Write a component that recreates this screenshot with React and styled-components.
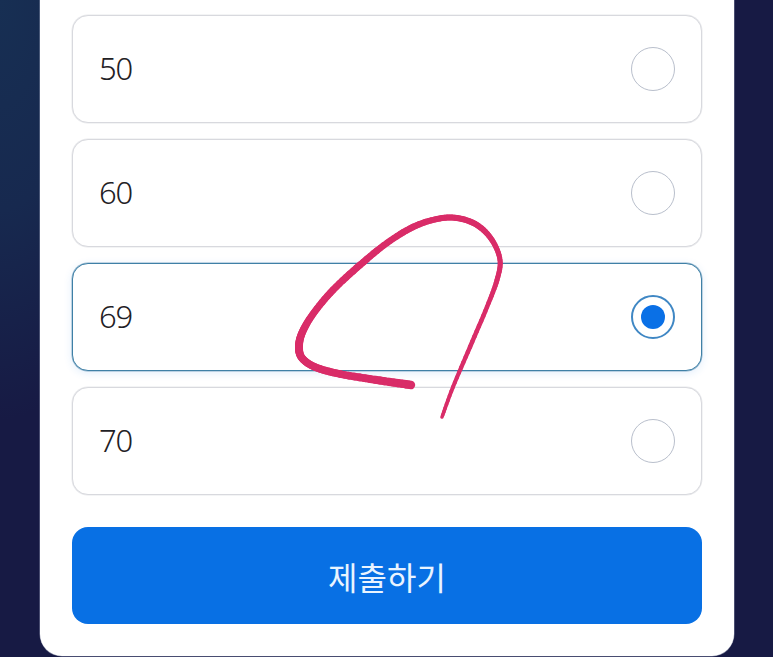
import React from "react";
import styled, { createGlobalStyle } from "styled-components";

const Global = createGlobalStyle`
  html, body { margin: 0; padding: 0; height: 100%; background: #171a44; }
  #root { height: 100%; }
`;

const Page = styled.main`
  position: relative;
  box-sizing: border-box;
  width: 773px;
  height: 657px;
  overflow: hidden;
  padding: 0 39px 1px 40px;
  background:
    radial-gradient(ellipse 170px 420px at 0 0, #172f53 0%, #17294f 50%, rgba(23, 26, 68, 0) 100%),
    #171a44;
  font-family: "Noto Sans CJK KR", "Noto Sans", sans-serif;
`;

const Card = styled.section`
  box-sizing: border-box;
  height: 656px;
  padding: 15px 32px 0 32px;
  background: #fff;
  border-radius: 0 0 22px 22px;
  box-shadow: 0 0 0 0.5px rgba(170, 175, 195, 0.7);
  display: flex;
  flex-direction: column;
`;

const Options = styled.div`
  display: flex;
  flex-direction: column;
  gap: 16px;
`;

const Option = styled.label`
  box-sizing: border-box;
  height: 108px;
  padding: 0 26px 0 26px;
  display: flex;
  align-items: center;
  justify-content: space-between;
  background: #fff;
  border-radius: 16px;
  border: 1px solid ${(p) => (p.$selected ? "#3f80a6" : "#d8d9de")};
  box-shadow: ${(p) =>
    p.$selected
      ? "0 0 0 0.5px rgba(70, 130, 170, 0.6), 0 2px 8px rgba(40, 130, 230, 0.14)"
      : "0 0 0 0.5px rgba(225, 226, 230, 0.8)"};
`;

const Value = styled.span`
  font-family: "Noto Sans", sans-serif;
  font-size: 31px;
  font-weight: 300;
  letter-spacing: -1.2px;
  color: #1f2125;
  line-height: 1;
  position: relative;
  top: -1px;
`;

const Radio = styled.span`
  box-sizing: border-box;
  width: 44px;
  height: 44px;
  border-radius: 50%;
  display: flex;
  align-items: center;
  justify-content: center;
  background: #fff;
  border: ${(p) => (p.$selected ? "2px solid #3f87c4" : "1px solid #b9bfcc")};
`;

const Dot = styled.span`
  width: 24px;
  height: 24px;
  border-radius: 50%;
  background: #0a70e6;
`;

const Submit = styled.button`
  margin-top: 32px;
  width: 100%;
  height: 97px;
  border: none;
  border-radius: 16px;
  background: #0870e4;
  color: #e9f4ff;
  font-family: "Noto Sans CJK KR", sans-serif;
  font-size: 32px;
  font-weight: 400;
`;

const Scribble = styled.svg`
  position: absolute;
  left: 0;
  top: 0;
  width: 773px;
  height: 657px;
  pointer-events: none;
`;

/* hand-drawn pen stroke: [x, y, width] in page pixels */
const stroke = [
  [411, 385, 8.5], [380, 380.5, 8], [340, 374, 7.5], [315, 367, 7.5], [302, 358, 7.5],
  [299, 347, 8], [302, 333, 7.5], [313, 314, 7], [333, 290, 7], [360, 265, 7],
  [387, 243, 6.5], [413, 227, 6.5], [437, 219, 6], [457, 218, 6], [477, 225, 6],
  [492, 240, 5.5], [500, 260, 5], [497, 280, 5], [487, 307, 4.5], [470, 347, 4.5],
  [453, 387, 4], [442, 417, 3.5],
];

function smooth(points, steps = 8) {
  const out = [];
  for (let i = 0; i < points.length - 1; i++) {
    const p0 = points[Math.max(i - 1, 0)];
    const p1 = points[i];
    const p2 = points[i + 1];
    const p3 = points[Math.min(i + 2, points.length - 1)];
    for (let s = 0; s < steps; s++) {
      const t = s / steps;
      const cr = (k) =>
        0.5 * (2 * p1[k] + (p2[k] - p0[k]) * t +
          (2 * p0[k] - 5 * p1[k] + 4 * p2[k] - p3[k]) * t * t +
          (3 * p1[k] - p0[k] - 3 * p2[k] + p3[k]) * t * t * t);
      out.push([cr(0), cr(1), p1[2] + (p2[2] - p1[2]) * t]);
    }
  }
  out.push(points[points.length - 1]);
  return out;
}

const options = [
  { value: "50" },
  { value: "60" },
  { value: "69", selected: true },
  { value: "70" },
];

export default function App() {
  const pts = smooth(stroke);
  return (
    <>
      <Global />
      <Page>
        <Card>
          <Options>
            {options.map((o) => (
              <Option key={o.value} $selected={o.selected}>
                <Value>{o.value}</Value>
                <Radio $selected={o.selected}>{o.selected && <Dot />}</Radio>
              </Option>
            ))}
          </Options>
          <Submit>제출하기</Submit>
        </Card>
        <Scribble viewBox="0 0 773 657">
          <g stroke="#d92c68" strokeLinecap="round" fill="none">
            {pts.slice(1).map((p, i) => (
              <line key={i} x1={pts[i][0]} y1={pts[i][1]} x2={p[0]} y2={p[1]} strokeWidth={p[2]} />
            ))}
          </g>
        </Scribble>
      </Page>
    </>
  );
}
